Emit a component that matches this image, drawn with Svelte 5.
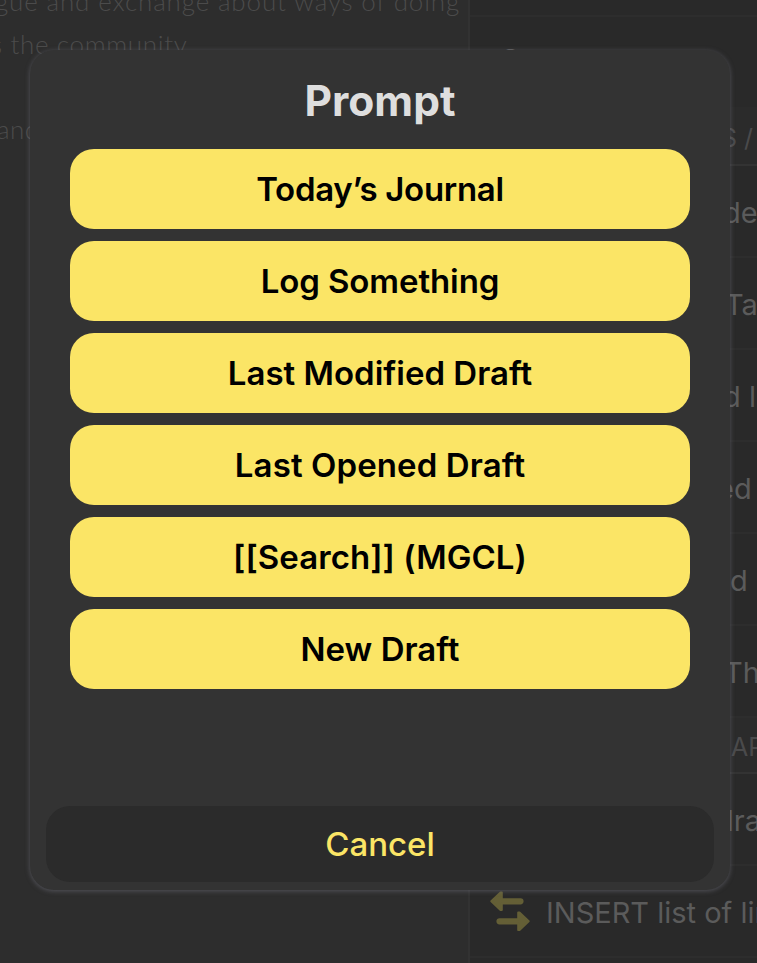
<script>
  const notes = [
    { text: 'gue and exchange about ways of doing', x: -5, spacing: 0.84 },
    { text: 's the community.', x: -9, spacing: 0.65 },
    { text: '', x: 0, spacing: 0 },
    { text: 'and', x: -3, spacing: 0.4 }
  ];

  const groups = [
    { title: 'S /', x: 251, rows: [
      { text: 'de', x: 253 },
      { text: 'Ta', x: 255 },
      { text: 'd l', x: 253 },
      { text: 'ed', x: 247 },
      { text: 'd', x: 260 },
      { text: 'Th', x: 254 }
    ] },
    { title: 'AR', x: 261, rows: [
      { text: 'dra', x: 246 },
      { text: 'INSERT list of links', x: 76, icon: true }
    ] }
  ];

  const options = [
    { label: "Today’s Journal", spacing: -0.3 },
    { label: 'Log Something', spacing: -0.1 },
    { label: 'Last Modified Draft', spacing: 0 },
    { label: 'Last Opened Draft', spacing: 0.1 },
    { label: '[[Search]] (MGCL)', spacing: 0.06 },
    { label: 'New Draft', spacing: 0 }
  ];
</script>

<div class="screen">
  <div class="editor">
    {#each notes as line}
      <p style="margin-left: {line.x}px; letter-spacing: {line.spacing}px">{line.text}</p>
    {/each}
  </div>
  <div class="sidebar">
    <div class="strip"></div>
    <div class="top"><span>S</span></div>
    {#each groups as group, i}
      <div class="heading" class:compact={i > 0}><span style="margin-left: {group.x}px">{group.title}</span></div>
      {#each group.rows as row}
        <div class="row">
          {#if row.icon}
            <svg class="swap" viewBox="0 0 40 40" width="40" height="40" aria-hidden="true">
              <g fill="#645f36" stroke="#645f36" stroke-width="2" stroke-linejoin="round">
                <path d="M1.3 10.3 10.5 1.5h1.3v6.7h18.7a2.1 2.1 0 0 1 0 4.2H11.8v6.7h-1.3Z" />
                <path d="M38.7 30.2 29.5 21.5h-1.3v6.7H9.5a2.1 2.1 0 0 0 0 4.2h18.7v6.7h1.3Z" />
              </g>
            </svg>
          {/if}
          <span style="margin-left: {row.x}px">{row.text}</span>
        </div>
      {/each}
    {/each}
  </div>

  <div class="dialog" role="dialog" aria-label="Prompt">
    <h1>Prompt</h1>
    <div class="options">
      {#each options as option}
        <button><span style="letter-spacing: {option.spacing}px">{option.label}</span></button>
      {/each}
    </div>
    <button class="cancel">Cancel</button>
  </div>
</div>

<style>
  :global(body) { background: #2d2d2d; }
  .screen {
    position: relative;
    display: flex;
    width: 757px;
    height: 963px;
    overflow: hidden;
    font-family: Inter, "Liberation Sans", sans-serif;
    background: #2d2d2d;
  }
  .editor {
    box-sizing: border-box;
    width: 470px;
    flex: none;
    overflow: hidden;
    border-right: 2px solid #323232;
    background: #2d2d2d;
    color: #4b4b4b;
    font: 300 26px/42.5px Lato, sans-serif;
    white-space: nowrap;
  }
  .editor p { height: 42.5px; margin: 0; }
  .editor p:first-child { margin-top: -20px; }
  .sidebar {
    width: 287px;
    flex: none;
    overflow: hidden;
    background: #292929;
    color: #5b5b5b;
    white-space: nowrap;
  }
  .strip { box-sizing: border-box; height: 17px; border-bottom: 2px solid #2d2d2d; }
  .top { height: 90px; }
  .top span { display: block; padding: 25px 0 0 30px; font-size: 32px; line-height: 40px; }
  .heading {
    box-sizing: border-box;
    height: 59px;
    padding-top: 14px;
    border-bottom: 2px solid #333;
    background: #2b2b2b;
    color: #4a4a4b;
    font-size: 25px;
    line-height: 34px;
  }
  .compact { height: 56px; padding-top: 12px; }
  .heading span, .row > span { display: inline-block; }
  .row {
    position: relative;
    box-sizing: border-box;
    height: 92px;
    border-bottom: 2px solid #2d2d2d;
    font-size: 29px;
    line-height: 93px;
  }
  .swap { position: absolute; left: 20px; top: 25px; }

  .dialog {
    position: absolute;
    left: 30px;
    top: 50px;
    box-sizing: border-box;
    width: 700px;
    height: 840px;
    display: flex;
    flex-direction: column;
    padding: 22px 16px 8px;
    border-radius: 24px;
    background: #333;
    box-shadow: 0 1px 5px rgba(125, 125, 140, 0.5);
  }
  h1 {
    margin: 0;
    height: 77px;
    color: #dedede;
    font-size: 42.5px;
    font-weight: 700;
    line-height: 58px;
    text-align: center;
  }
  .options { display: flex; flex-direction: column; gap: 12px; padding: 0 24px; }
  button {
    display: block;
    height: 80px;
    padding: 0;
    border: 0;
    border-radius: 24px;
    background: #fbe566;
    color: #000;
    font: 600 33px/80px Inter, "Liberation Sans", sans-serif;
    text-align: center;
    white-space: nowrap;
  }
  .cancel {
    height: 76px;
    margin-top: auto;
    background: #2b2b2b;
    color: #fbe566;
    font-weight: 450;
    line-height: 76px;
  }
</style>
